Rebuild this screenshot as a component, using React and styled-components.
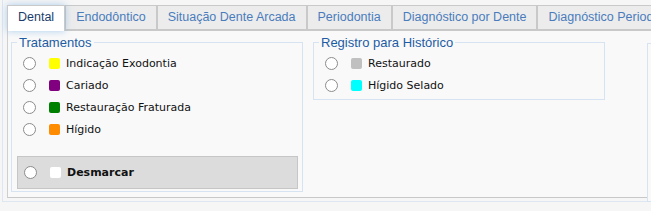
import React from 'react';
import styled, { createGlobalStyle } from 'styled-components';

const GlobalStyle = createGlobalStyle`
  html, body {
    margin: 0;
    padding: 0;
    background: #f6f6f6;
    overflow: hidden;
  }
  body {
    width: 651px;
    height: 211px;
    font-family: "Liberation Sans", Arial, sans-serif;
  }
`;

const tabs = [
    'Dental',
    'Endodôntico',
    'Situação Dente Arcada',
    'Periodontia',
    'Diagnóstico por Dente',
    'Diagnóstico Periodontal',
];

const tratamentos = [
    { label: 'Indicação Exodontia', color: '#ffff00' },
    { label: 'Cariado', color: '#800080' },
    { label: 'Restauração Fraturada', color: '#008000' },
    { label: 'Hígido', color: '#ff8c00' },
];

const historico = [
    { label: 'Restaurado', color: '#c0c0c0' },
    { label: 'Hígido Selado', color: '#00ffff' },
];

function Option (props) {
    return (
        <Row>
            <Radio type="radio" name={props.group} />
            <Swatch color={props.color} />
            <Label bold={props.bold}>{props.label}</Label>
        </Row>
    );
}

export default function App () {
    return (
        <>
            <GlobalStyle />
            <Outer>
                <TabBar>
                    {tabs.map((t, i) => (
                        <Tab key={t} active={i === 0}>{t}</Tab>
                    ))}
                </TabBar>

                <Panel>
                    <Group width={292}>
                        <Legend>Tratamentos</Legend>
                        <List>
                            {tratamentos.map((o) => (
                                <Option key={o.label} group="trat" {...o} />
                            ))}
                        </List>
                        <ClearBox>
                            <Option group="trat" label="Desmarcar" color="#ffffff" bold />
                        </ClearBox>
                    </Group>

                    <Group width={292} gap={10} bottom={3}>
                        <Legend>Registro para Histórico</Legend>
                        <List>
                            {historico.map((o) => (
                                <Option key={o.label} group="hist" {...o} />
                            ))}
                        </List>
                    </Group>

                    <EmptyGroup />
                </Panel>
            </Outer>
        </>
    );
}

const Outer = styled.div`
    margin-left: 2px;
    width: 900px;
    padding: 5px 0 3px 4px;
    border-left: 1px solid #dde6f1;
    border-bottom: 1px solid #dde6f1;
`;

const TabBar = styled.div`
    display: flex;
    align-items: flex-start;
    white-space: nowrap;
    border-bottom: 1px solid #c9c9c9;
    height: 25px;
`;

const Tab = styled.div`
    box-sizing: border-box;
    flex: none;
    height: ${(p) => (p.active ? '26px' : '25px')};
    line-height: 23px;
    padding: 0 10px;
    font-size: 12.5px;
    color: ${(p) => (p.active ? '#1b3c6b' : '#4a7cbc')};
    background: ${(p) => (p.active ? '#ffffff' : '#ececec')};
    border: 1px solid #c9c9c9;
    border-bottom: ${(p) => (p.active ? 'none' : '1px solid #c9c9c9')};
    box-shadow: ${(p) => (p.active ? '0 0 7px rgba(110, 170, 230, 0.55)' : 'none')};
    position: relative;
    z-index: ${(p) => (p.active ? 1 : 0)};
`;

const Panel = styled.div`
    box-sizing: border-box;
    display: flex;
    align-items: flex-start;
    width: 880px;
    height: 167px;
    padding: 4px 0 0 3px;
    background: #f9f9f9;
    border-left: 1px solid #cfcfcf;
    border-bottom: 1px solid #c8c8c8;
`;

const Group = styled.fieldset`
    box-sizing: border-box;
    flex: none;
    width: ${(p) => p.width}px;
    min-width: 0;
    margin: 0 0 0 ${(p) => p.gap || 0}px;
    padding: 0 4px ${(p) => (p.bottom != null ? p.bottom : 2)}px 5px;
    border: 1px solid #d6e3f3;
    background: #f9f9f9;
`;

const EmptyGroup = styled.fieldset`
    box-sizing: border-box;
    flex: none;
    align-self: flex-start;
    width: 200px;
    height: 159px;
    margin: 8px 0 0 42px;
    padding: 0;
    border: 1px solid #d6e3f3;
    background: #f9f9f9;
    position: relative;
`;

const Legend = styled.legend`
    padding: 0 2px;
    font-size: 13px;
    line-height: 15px;
    color: #1d5ca4;
`;

const List = styled.div`
    display: flex;
    flex-direction: column;
    padding-top: 2px;
`;

const Row = styled.label`
    display: flex;
    align-items: center;
    height: 22px;
`;

const Radio = styled.input`
    appearance: none;
    box-sizing: border-box;
    flex: none;
    width: 13px;
    height: 13px;
    margin: 0 0 0 6px;
    border-radius: 50%;
    border: 1px solid #8c8c8c;
    background: #ffffff;
`;

const Swatch = styled.span`
    flex: none;
    width: 11px;
    height: 11px;
    margin-left: 13px;
    border-radius: 2px;
    background: ${(p) => p.color};
`;

const Label = styled.span`
    margin-left: 6px;
    font-family: "DejaVu Sans", Verdana, sans-serif;
    font-size: 11px;
    font-weight: ${(p) => (p.bold ? 'bold' : 'normal')};
    color: #111111;
`;

const ClearBox = styled.div`
    box-sizing: border-box;
    display: flex;
    align-items: center;
    height: 33px;
    margin-top: 16px;
    background: #dcdcdc;
    border: 1px solid #c6c6c6;
`;
